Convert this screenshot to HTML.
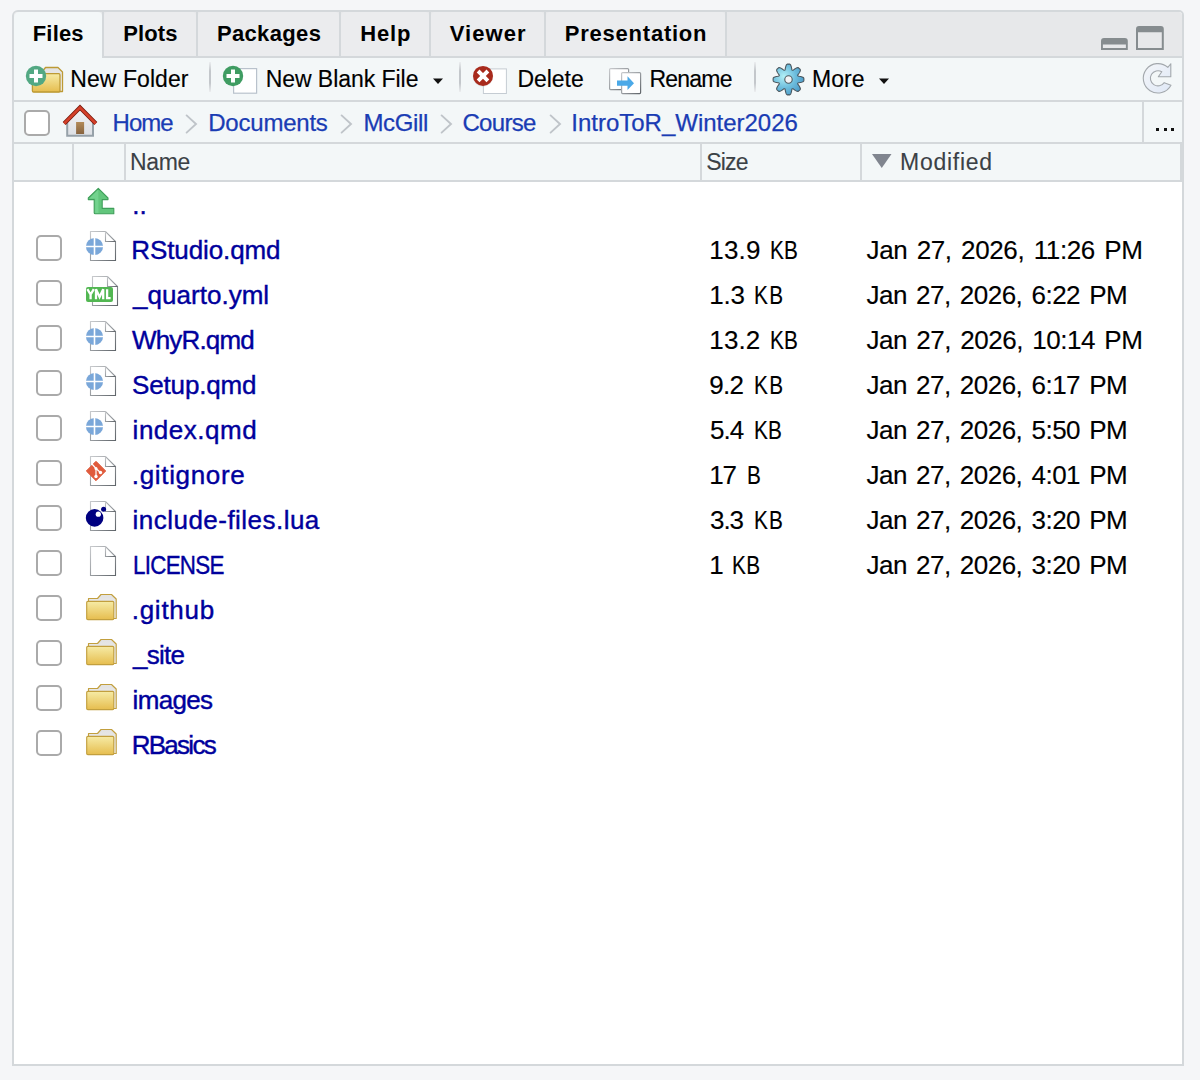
<!DOCTYPE html>
<html><head><meta charset="utf-8"><style>
*{margin:0;padding:0;box-sizing:border-box}
html,body{width:1200px;height:1080px;overflow:hidden;background:#f5f6f8;font-family:"Liberation Sans",sans-serif}
.a{position:absolute}
.t{position:absolute;white-space:nowrap;line-height:1;-webkit-text-stroke:0.4px currentColor}
.t{line-height:var(--lh,1)}
.i{position:absolute;overflow:visible}
.cb{position:absolute;width:26px;height:26px;border:2px solid #aaaaaa;border-radius:5px;background:#fff}
.sep{position:absolute;width:2px;top:62px;height:30px;background:linear-gradient(#eceef0,#c3c7cb 30%,#c3c7cb 70%,#eceef0)}
</style></head><body>
<svg width="0" height="0" style="position:absolute"><defs>
<linearGradient id="pg" x1="0" y1="0" x2="1" y2="1"><stop offset="0" stop-color="#c8cacd"/><stop offset="0.5" stop-color="#9a9ea2"/><stop offset="1" stop-color="#5f6469"/></linearGradient>
<linearGradient id="ffront" x1="0" y1="0" x2="0" y2="1"><stop offset="0" stop-color="#f6eba6"/><stop offset="1" stop-color="#e6bd4e"/></linearGradient>
<linearGradient id="fback" x1="0" y1="0" x2="0" y2="1"><stop offset="0" stop-color="#e2e2e2"/><stop offset="1" stop-color="#f4f4f4"/></linearGradient>
<radialGradient id="gear" cx="0.35" cy="0.4" r="0.7"><stop offset="0" stop-color="#b2f0f6"/><stop offset="0.55" stop-color="#6cbcdc"/><stop offset="1" stop-color="#4a98c6"/></radialGradient>
<linearGradient id="door" x1="0" y1="0" x2="0" y2="1"><stop offset="0" stop-color="#b28a58"/><stop offset="1" stop-color="#87633f"/></linearGradient>
<linearGradient id="hbody" x1="0" y1="0" x2="0" y2="1"><stop offset="0" stop-color="#f3f3f5"/><stop offset="1" stop-color="#dcdfe4"/></linearGradient>
<linearGradient id="refr" x1="0" y1="0" x2="1" y2="1"><stop offset="0" stop-color="#f4f6f9"/><stop offset="1" stop-color="#dfe8f6"/></linearGradient>
</defs></svg>

<!-- pane -->
<div class="a" style="left:12px;top:10px;width:1172px;height:1056px;border:2px solid #d4d8db;border-radius:6px 5px 0 0;background:#fff;overflow:hidden">
</div>
<!-- tab bar bg -->
<div class="a" style="left:14px;top:12px;width:1168px;height:44px;background:#e7e8ea;border-radius:4px 3px 0 0"></div>
<div class="a" style="left:14px;top:56px;width:1168px;height:2px;background:#d4d8db"></div>
<!-- inactive tabs -->
<div class="a" style="left:104px;top:12px;width:92px;height:44px;background:#ebecee;border-radius:4px 4px 0 0"></div>
<div class="a" style="left:198px;top:12px;width:141px;height:44px;background:#ebecee;border-radius:4px 4px 0 0"></div>
<div class="a" style="left:341px;top:12px;width:88px;height:44px;background:#ebecee;border-radius:4px 4px 0 0"></div>
<div class="a" style="left:431px;top:12px;width:113px;height:44px;background:#ebecee;border-radius:4px 4px 0 0"></div>
<div class="a" style="left:546px;top:12px;width:179px;height:44px;background:#ebecee;border-radius:4px 4px 0 0"></div>
<!-- dividers -->
<div class="a" style="left:102px;top:12px;width:2px;height:44px;background:#d4d8db"></div>
<div class="a" style="left:196px;top:12px;width:2px;height:44px;background:#d4d8db"></div>
<div class="a" style="left:339px;top:12px;width:2px;height:44px;background:#d4d8db"></div>
<div class="a" style="left:429px;top:12px;width:2px;height:44px;background:#d4d8db"></div>
<div class="a" style="left:544px;top:12px;width:2px;height:44px;background:#d4d8db"></div>
<div class="a" style="left:725px;top:12px;width:2px;height:44px;background:#d4d8db"></div>
<!-- active tab -->
<div class="a" style="left:14px;top:12px;width:88px;height:48px;background:#f3f7f8;border-radius:5px 4px 0 0"></div>
<!-- toolbar -->
<div class="a" style="left:14px;top:58px;width:1168px;height:42px;background:#f3f7f8"></div>
<div class="a" style="left:14px;top:100px;width:1168px;height:2px;background:#d4d8db"></div>
<!-- breadcrumb bar -->
<div class="a" style="left:14px;top:102px;width:1168px;height:40px;background:#f3f7f8"></div>
<div class="a" style="left:14px;top:142px;width:1168px;height:2px;background:#d4d8db"></div>
<div class="a" style="left:1142px;top:102px;width:2px;height:40px;background:#d4d8db"></div>
<!-- header -->
<div class="a" style="left:14px;top:144px;width:1166px;height:36px;background:#f3f7f8"></div>
<div class="a" style="left:14px;top:180px;width:1168px;height:2px;background:#d4d8db"></div>
<div class="a" style="left:1180px;top:144px;width:2px;height:38px;background:#d4d8db"></div>
<div class="a" style="left:72px;top:144px;width:2px;height:36px;background:#d4d8db"></div>
<div class="a" style="left:124px;top:144px;width:2px;height:36px;background:#d4d8db"></div>
<div class="a" style="left:700px;top:144px;width:2px;height:36px;background:#d4d8db"></div>
<div class="a" style="left:860px;top:144px;width:2px;height:36px;background:#d4d8db"></div>

<!-- toolbar separators -->
<div class="sep" style="left:209px"></div>
<div class="sep" style="left:459px"></div>
<div class="sep" style="left:754px"></div>

<!-- toolbar icons -->
<svg class="i" style="left:24px;top:64px" width="42" height="32" viewBox="0 0 42 32">
<path d="M9.5,8 H18 L21.5,3.5 H34 L38.5,8 V27.5 H9.5 Z" fill="url(#fback)" stroke="#bd9a35" stroke-width="1.3" stroke-linejoin="round"/>
<rect x="8.4" y="9.7" width="27.6" height="18.3" rx="1.2" fill="url(#ffront)" stroke="#bd9a35" stroke-width="1.3"/>
<circle cx="12" cy="12" r="10.2" fill="#52a883"/>
<path d="M12,5.5 V18.5 M5.5,12 H18.5" stroke="#fff" stroke-width="4"/>
</svg>
<svg class="i" style="left:221px;top:64px" width="38" height="32" viewBox="0 0 38 32">
<rect x="12.6" y="4.6" width="23" height="24.6" fill="#fff" stroke="#b9c2cc" stroke-width="1.2"/>
<circle cx="12" cy="12" r="10.2" fill="#3f9c62"/>
<path d="M12,5.5 V18.5 M5.5,12 H18.5" stroke="#fff" stroke-width="4"/>
</svg>
<svg class="i" style="left:470px;top:64px" width="40" height="32" viewBox="0 0 40 32">
<rect x="13.4" y="4.9" width="23" height="24.6" fill="#fff" stroke="#c5ccd3" stroke-width="1"/>
<circle cx="13" cy="12.6" r="10.2" fill="#000" opacity="0.08"/>
<circle cx="13" cy="11.9" r="10" fill="#a82a1c"/>
<path d="M8.1,7 L17.9,16.8 M17.9,7 L8.1,16.8" stroke="#fff" stroke-width="3.9"/>
</svg>
<svg class="i" style="left:606px;top:64px" width="38" height="32" viewBox="0 0 38 32">
<rect x="3.6" y="4.6" width="19" height="21" rx="1" fill="#fff" stroke="url(#pg)" stroke-width="1.2"/>
<rect x="15.6" y="8.6" width="19" height="21" rx="1" fill="#fff" stroke="url(#pg)" stroke-width="1.2"/>
<path d="M11,16.5 H21.5 V12.2 L28,19.2 L21.5,26 V21.8 H11 Z" fill="#4ba9e8"/>
</svg>
<svg class="i" style="left:772px;top:63px" width="33" height="33" viewBox="-16.5 -16.5 33 33">
<path id="gearp" d="M0.00,-15.40 L0.40,-15.39 L0.81,-15.38 L1.21,-15.34 L1.59,-15.16 L1.95,-14.81 L2.27,-14.30 L2.54,-13.68 L2.76,-12.97 L2.94,-12.23 L3.08,-11.50 L3.20,-10.81 L3.32,-10.22 L3.45,-9.74 L3.61,-9.41 L3.83,-9.24 L4.10,-9.21 L4.45,-9.33 L4.88,-9.57 L5.38,-9.91 L5.95,-10.31 L6.57,-10.72 L7.22,-11.12 L7.88,-11.47 L8.51,-11.72 L9.09,-11.85 L9.59,-11.85 L10.00,-11.70 L10.30,-11.44 L10.60,-11.17 L10.89,-10.89 L11.17,-10.60 L11.44,-10.30 L11.70,-10.00 L11.85,-9.59 L11.85,-9.09 L11.72,-8.51 L11.47,-7.88 L11.12,-7.22 L10.72,-6.57 L10.31,-5.95 L9.91,-5.38 L9.57,-4.88 L9.33,-4.45 L9.21,-4.10 L9.24,-3.83 L9.41,-3.61 L9.74,-3.45 L10.22,-3.32 L10.81,-3.20 L11.50,-3.08 L12.23,-2.94 L12.97,-2.76 L13.68,-2.54 L14.30,-2.27 L14.81,-1.95 L15.16,-1.59 L15.34,-1.21 L15.38,-0.81 L15.39,-0.40 L15.40,-0.00 L15.39,0.40 L15.38,0.81 L15.34,1.21 L15.16,1.59 L14.81,1.95 L14.30,2.27 L13.68,2.54 L12.97,2.76 L12.23,2.94 L11.50,3.08 L10.81,3.20 L10.22,3.32 L9.74,3.45 L9.41,3.61 L9.24,3.83 L9.21,4.10 L9.33,4.45 L9.57,4.88 L9.91,5.38 L10.31,5.95 L10.72,6.57 L11.12,7.22 L11.47,7.88 L11.72,8.51 L11.85,9.09 L11.85,9.59 L11.70,10.00 L11.44,10.30 L11.17,10.60 L10.89,10.89 L10.60,11.17 L10.30,11.44 L10.00,11.70 L9.59,11.85 L9.09,11.85 L8.51,11.72 L7.88,11.47 L7.22,11.12 L6.57,10.72 L5.95,10.31 L5.38,9.91 L4.88,9.57 L4.45,9.33 L4.10,9.21 L3.83,9.24 L3.61,9.41 L3.45,9.74 L3.32,10.22 L3.20,10.81 L3.08,11.50 L2.94,12.23 L2.76,12.97 L2.54,13.68 L2.27,14.30 L1.95,14.81 L1.59,15.16 L1.21,15.34 L0.81,15.38 L0.40,15.39 L0.00,15.40 L-0.40,15.39 L-0.81,15.38 L-1.21,15.34 L-1.59,15.16 L-1.95,14.81 L-2.27,14.30 L-2.54,13.68 L-2.76,12.97 L-2.94,12.23 L-3.08,11.50 L-3.20,10.81 L-3.32,10.22 L-3.45,9.74 L-3.61,9.41 L-3.83,9.24 L-4.10,9.21 L-4.45,9.33 L-4.88,9.57 L-5.38,9.91 L-5.95,10.31 L-6.57,10.72 L-7.22,11.12 L-7.88,11.47 L-8.51,11.72 L-9.09,11.85 L-9.59,11.85 L-10.00,11.70 L-10.30,11.44 L-10.60,11.17 L-10.89,10.89 L-11.17,10.60 L-11.44,10.30 L-11.70,10.00 L-11.85,9.59 L-11.85,9.09 L-11.72,8.51 L-11.47,7.88 L-11.12,7.22 L-10.72,6.57 L-10.31,5.95 L-9.91,5.38 L-9.57,4.88 L-9.33,4.45 L-9.21,4.10 L-9.24,3.83 L-9.41,3.61 L-9.74,3.45 L-10.22,3.32 L-10.81,3.20 L-11.50,3.08 L-12.23,2.94 L-12.97,2.76 L-13.68,2.54 L-14.30,2.27 L-14.81,1.95 L-15.16,1.59 L-15.34,1.21 L-15.38,0.81 L-15.39,0.40 L-15.40,0.00 L-15.39,-0.40 L-15.38,-0.81 L-15.34,-1.21 L-15.16,-1.59 L-14.81,-1.95 L-14.30,-2.27 L-13.68,-2.54 L-12.97,-2.76 L-12.23,-2.94 L-11.50,-3.08 L-10.81,-3.20 L-10.22,-3.32 L-9.74,-3.45 L-9.41,-3.61 L-9.24,-3.83 L-9.21,-4.10 L-9.33,-4.45 L-9.57,-4.88 L-9.91,-5.38 L-10.31,-5.95 L-10.72,-6.57 L-11.12,-7.22 L-11.47,-7.88 L-11.72,-8.51 L-11.85,-9.09 L-11.85,-9.59 L-11.70,-10.00 L-11.44,-10.30 L-11.17,-10.60 L-10.89,-10.89 L-10.60,-11.17 L-10.30,-11.44 L-10.00,-11.70 L-9.59,-11.85 L-9.09,-11.85 L-8.51,-11.72 L-7.88,-11.47 L-7.22,-11.12 L-6.57,-10.72 L-5.95,-10.31 L-5.38,-9.91 L-4.88,-9.57 L-4.45,-9.33 L-4.10,-9.21 L-3.83,-9.24 L-3.61,-9.41 L-3.45,-9.74 L-3.32,-10.22 L-3.20,-10.81 L-3.08,-11.50 L-2.94,-12.23 L-2.76,-12.97 L-2.54,-13.68 L-2.27,-14.30 L-1.95,-14.81 L-1.59,-15.16 L-1.21,-15.34 L-0.81,-15.38 L-0.40,-15.39 L-0.00,-15.40 Z" fill="url(#gear)" stroke="#3a4248" stroke-width="1.1" stroke-opacity="0.85"/>
<circle cx="0" cy="0" r="3.7" fill="#f2f4f6" stroke="#3a4248" stroke-width="1.1" stroke-opacity="0.85"/>
</svg>
<svg class="i" style="left:432px;top:77px" width="12" height="8" viewBox="0 0 12 8"><path d="M1,1.5 H11 L6,7 Z" fill="#111"/></svg>
<svg class="i" style="left:878px;top:77px" width="12" height="8" viewBox="0 0 12 8"><path d="M1,1.5 H11 L6,7 Z" fill="#111"/></svg>
<!-- refresh -->
<svg class="i" style="left:1141px;top:61px" width="34" height="34" viewBox="0 0 34 34">
<path d="M29.8,2.75 V15.7 H17.3 L20.8,10.72 A7.6,7.6 0 1 0 23.22,21.66 L29.98,24.2 A14.7,14.7 0 1 1 26.84,6.38 Z" fill="url(#refr)" stroke="#a3a8ad" stroke-width="1.1" stroke-linejoin="round"/>
</svg>
<!-- min / max -->
<svg class="i" style="left:1100px;top:25px" width="66" height="26" viewBox="0 0 66 26">
<path d="M1,25 V16 Q1,13 4,13 H24.8 Q27.8,13 27.8,16 V25 Z M2.9,19.5 V23.1 H25.9 V19.5 Z" fill="#868c8f" fill-rule="evenodd"/>
<path d="M36,25 V4 Q36,1 39,1 H60.8 Q63.8,1 63.8,4 V25 Z M38,7.2 V23 H61.8 V7.2 Z" fill="#868c8f" fill-rule="evenodd"/>
</svg>
<!-- breadcrumb checkbox, home, chevrons -->
<div class="cb" style="left:24px;top:110px"></div>
<svg class="i" style="left:62px;top:104px" width="36" height="34" viewBox="0 0 36 34">
<path d="M5,17 L18,4.5 L31,17 V31.8 H5 Z" fill="url(#hbody)"/>
<path d="M5.2,18 V31.8 H31 V18" fill="none" stroke="#96a1a9" stroke-width="2"/>
<rect x="14.1" y="18" width="8" height="12" fill="url(#door)"/>
<path d="M2.2,19.5 L18,3.6 L33.8,19.5" fill="none" stroke="#7a1a0c" stroke-width="4.2"/>
<path d="M2.2,19.5 L18,3.6 L33.8,19.5" fill="none" stroke="#d5402a" stroke-width="2.6"/>
</svg>
<svg class="i" style="left:184px;top:114px" width="16" height="20" viewBox="0 0 16 20"><path d="M2.6,1.4 L12,10 L2.6,18.6" fill="none" stroke="#bfc4c9" stroke-width="1.9" stroke-linecap="round"/></svg>
<svg class="i" style="left:339px;top:114px" width="16" height="20" viewBox="0 0 16 20"><path d="M2.6,1.4 L12,10 L2.6,18.6" fill="none" stroke="#bfc4c9" stroke-width="1.9" stroke-linecap="round"/></svg>
<svg class="i" style="left:439px;top:114px" width="16" height="20" viewBox="0 0 16 20"><path d="M2.6,1.4 L12,10 L2.6,18.6" fill="none" stroke="#bfc4c9" stroke-width="1.9" stroke-linecap="round"/></svg>
<svg class="i" style="left:547.5px;top:114px" width="16" height="20" viewBox="0 0 16 20"><path d="M2.6,1.4 L12,10 L2.6,18.6" fill="none" stroke="#bfc4c9" stroke-width="1.9" stroke-linecap="round"/></svg>
<!-- ellipsis -->
<div class="a" style="left:1156px;top:128px;width:3px;height:3px;background:#111"></div>
<div class="a" style="left:1164px;top:128px;width:3px;height:3px;background:#111"></div>
<div class="a" style="left:1171px;top:128px;width:3px;height:3px;background:#111"></div>
<!-- sort triangle -->
<svg class="i" style="left:871px;top:153px" width="22" height="16" viewBox="0 0 22 16"><path d="M1,1 H20.5 L10.75,15 Z" fill="#80858f"/></svg>
<!-- up arrow -->
<svg class="i" style="left:86px;top:186px" width="30" height="30" viewBox="0 0 30 30">
<path d="M12.3,2.3 L22,12 V13.6 H16.2 V22.4 H27.8 V27.8 H9.2 Q8.2,27.8 8.2,26.8 V13.6 H2.3 V12 Z" fill="#62c67c" stroke="#3f9f5a" stroke-width="1.1" stroke-linejoin="round"/>
<path d="M12.3,3.5 L3.5,12.5 H9.2 V27 H12.5 Z" fill="#7bd895" opacity="0.7"/>
</svg>
<div class="cb" style="left:36px;top:235px"></div>
<svg class="i" style="left:90px;top:231px" width="26" height="30" viewBox="0 0 26 30">
<path d="M0.5,0.5 H15.5 L25.5,10.5 V29.5 H0.5 Z" fill="#fff" stroke="url(#pg)" stroke-width="1.1"/>
<path d="M15.5,0.5 V10.5 H25.5" fill="none" stroke="url(#pg)" stroke-width="1.1"/>
</svg>
<svg class="i" style="left:85px;top:237px" width="20" height="20" viewBox="0 0 20 20">
<circle cx="9.5" cy="9.5" r="8.6" fill="#7aa7d9"/><path d="M9.5,0 V19 M0,9.5 H19" stroke="#fff" stroke-width="1.6"/></svg>
<div class="cb" style="left:36px;top:280px"></div>
<svg class="i" style="left:92px;top:276px" width="26" height="30" viewBox="0 0 26 30">
<path d="M0.5,0.5 H15.5 L25.5,10.5 V29.5 H0.5 Z" fill="#fff" stroke="url(#pg)" stroke-width="1.1"/>
<path d="M15.5,0.5 V10.5 H25.5" fill="none" stroke="url(#pg)" stroke-width="1.1"/>
</svg>
<svg class="i" style="left:86px;top:287px" width="27" height="15" viewBox="0 0 27 15">
<rect x="0" y="0" width="27" height="15" rx="2" fill="#52b752"/>
<path d="M1.4,2.2 L4.6,7.6 L7.8,2.2 M4.6,7.6 V12.3 M10,12.3 V2.2 L13.6,10 L17.2,2.2 V12.3 M21.1,2.2 V11.2 H24.6" fill="none" stroke="#fff" stroke-width="2.3" stroke-linejoin="miter"/></svg>
<div class="cb" style="left:36px;top:325px"></div>
<svg class="i" style="left:90px;top:321px" width="26" height="30" viewBox="0 0 26 30">
<path d="M0.5,0.5 H15.5 L25.5,10.5 V29.5 H0.5 Z" fill="#fff" stroke="url(#pg)" stroke-width="1.1"/>
<path d="M15.5,0.5 V10.5 H25.5" fill="none" stroke="url(#pg)" stroke-width="1.1"/>
</svg>
<svg class="i" style="left:85px;top:327px" width="20" height="20" viewBox="0 0 20 20">
<circle cx="9.5" cy="9.5" r="8.6" fill="#7aa7d9"/><path d="M9.5,0 V19 M0,9.5 H19" stroke="#fff" stroke-width="1.6"/></svg>
<div class="cb" style="left:36px;top:370px"></div>
<svg class="i" style="left:90px;top:366px" width="26" height="30" viewBox="0 0 26 30">
<path d="M0.5,0.5 H15.5 L25.5,10.5 V29.5 H0.5 Z" fill="#fff" stroke="url(#pg)" stroke-width="1.1"/>
<path d="M15.5,0.5 V10.5 H25.5" fill="none" stroke="url(#pg)" stroke-width="1.1"/>
</svg>
<svg class="i" style="left:85px;top:372px" width="20" height="20" viewBox="0 0 20 20">
<circle cx="9.5" cy="9.5" r="8.6" fill="#7aa7d9"/><path d="M9.5,0 V19 M0,9.5 H19" stroke="#fff" stroke-width="1.6"/></svg>
<div class="cb" style="left:36px;top:415px"></div>
<svg class="i" style="left:90px;top:411px" width="26" height="30" viewBox="0 0 26 30">
<path d="M0.5,0.5 H15.5 L25.5,10.5 V29.5 H0.5 Z" fill="#fff" stroke="url(#pg)" stroke-width="1.1"/>
<path d="M15.5,0.5 V10.5 H25.5" fill="none" stroke="url(#pg)" stroke-width="1.1"/>
</svg>
<svg class="i" style="left:85px;top:417px" width="20" height="20" viewBox="0 0 20 20">
<circle cx="9.5" cy="9.5" r="8.6" fill="#7aa7d9"/><path d="M9.5,0 V19 M0,9.5 H19" stroke="#fff" stroke-width="1.6"/></svg>
<div class="cb" style="left:36px;top:460px"></div>
<svg class="i" style="left:90px;top:456px" width="26" height="30" viewBox="0 0 26 30">
<path d="M0.5,0.5 H15.5 L25.5,10.5 V29.5 H0.5 Z" fill="#fff" stroke="url(#pg)" stroke-width="1.1"/>
<path d="M15.5,0.5 V10.5 H25.5" fill="none" stroke="url(#pg)" stroke-width="1.1"/>
</svg>
<svg class="i" style="left:84px;top:459px" width="24" height="24" viewBox="0 0 24 24">
<path d="M12,2.3 L21.7,12 L12,21.7 L2.3,12 Z" fill="#e05b3c" stroke="#e05b3c" stroke-width="1" stroke-linejoin="round"/>
<path d="M8,5 L12,9.5 L16.5,13.5 M12,9.5 V17.5" stroke="#fff" stroke-width="1.2" fill="none"/>
<circle cx="12" cy="17.5" r="1.7" fill="#fff"/><circle cx="16.5" cy="13.5" r="1.7" fill="#fff"/><circle cx="12" cy="9.5" r="1.5" fill="#fff"/></svg>
<div class="cb" style="left:36px;top:505px"></div>
<svg class="i" style="left:90px;top:501px" width="26" height="30" viewBox="0 0 26 30">
<path d="M0.5,0.5 H15.5 L25.5,10.5 V29.5 H0.5 Z" fill="#fff" stroke="url(#pg)" stroke-width="1.1"/>
<path d="M15.5,0.5 V10.5 H25.5" fill="none" stroke="url(#pg)" stroke-width="1.1"/>
</svg>
<svg class="i" style="left:84px;top:503px" width="24" height="24" viewBox="0 0 24 24">
<circle cx="10.6" cy="14.9" r="8.8" fill="#000080"/><circle cx="14.3" cy="11.2" r="2.6" fill="#fff"/><circle cx="19.6" cy="6.3" r="2.5" fill="#000080"/></svg>
<div class="cb" style="left:36px;top:550px"></div>
<svg class="i" style="left:90px;top:546px" width="26" height="30" viewBox="0 0 26 30">
<path d="M0.5,0.5 H15.5 L25.5,10.5 V29.5 H0.5 Z" fill="#fff" stroke="url(#pg)" stroke-width="1.1"/>
<path d="M15.5,0.5 V10.5 H25.5" fill="none" stroke="url(#pg)" stroke-width="1.1"/>
</svg>
<div class="cb" style="left:36px;top:595px"></div>
<svg class="i" style="left:85px;top:593px" width="33" height="28" viewBox="0 0 33 28">
<path d="M3.5,5.5 H12.5 L16,1.5 H26.5 L31.2,6 V25.5 H3.5 Z" fill="url(#fback)" stroke="#c29f3e" stroke-width="1.15" stroke-linejoin="round"/>
<rect x="1.7" y="8.4" width="27.1" height="18.2" rx="1.2" fill="url(#ffront)" stroke="#c29f3e" stroke-width="1.15"/></svg>
<div class="cb" style="left:36px;top:640px"></div>
<svg class="i" style="left:85px;top:638px" width="33" height="28" viewBox="0 0 33 28">
<path d="M3.5,5.5 H12.5 L16,1.5 H26.5 L31.2,6 V25.5 H3.5 Z" fill="url(#fback)" stroke="#c29f3e" stroke-width="1.15" stroke-linejoin="round"/>
<rect x="1.7" y="8.4" width="27.1" height="18.2" rx="1.2" fill="url(#ffront)" stroke="#c29f3e" stroke-width="1.15"/></svg>
<div class="cb" style="left:36px;top:685px"></div>
<svg class="i" style="left:85px;top:683px" width="33" height="28" viewBox="0 0 33 28">
<path d="M3.5,5.5 H12.5 L16,1.5 H26.5 L31.2,6 V25.5 H3.5 Z" fill="url(#fback)" stroke="#c29f3e" stroke-width="1.15" stroke-linejoin="round"/>
<rect x="1.7" y="8.4" width="27.1" height="18.2" rx="1.2" fill="url(#ffront)" stroke="#c29f3e" stroke-width="1.15"/></svg>
<div class="cb" style="left:36px;top:730px"></div>
<svg class="i" style="left:85px;top:728px" width="33" height="28" viewBox="0 0 33 28">
<path d="M3.5,5.5 H12.5 L16,1.5 H26.5 L31.2,6 V25.5 H3.5 Z" fill="url(#fback)" stroke="#c29f3e" stroke-width="1.15" stroke-linejoin="round"/>
<rect x="1.7" y="8.4" width="27.1" height="18.2" rx="1.2" fill="url(#ffront)" stroke="#c29f3e" stroke-width="1.15"/></svg>
<div class="t" style="left:32.78px;top:22.98px;font-size:22px;font-weight:bold;-webkit-text-stroke:0;letter-spacing:0.155px;color:#000;">Files</div>
<div class="t" style="left:123.34px;top:22.98px;font-size:22px;font-weight:bold;-webkit-text-stroke:0;letter-spacing:0.065px;color:#000;">Plots</div>
<div class="t" style="left:216.90px;top:22.98px;font-size:22px;font-weight:bold;-webkit-text-stroke:0;letter-spacing:0.360px;color:#000;">Packages</div>
<div class="t" style="left:360.26px;top:22.98px;font-size:22px;font-weight:bold;-webkit-text-stroke:0;letter-spacing:0.823px;color:#000;">Help</div>
<div class="t" style="left:449.65px;top:22.98px;font-size:22px;font-weight:bold;-webkit-text-stroke:0;letter-spacing:1.100px;color:#000;">Viewer</div>
<div class="t" style="left:564.82px;top:22.98px;font-size:22px;font-weight:bold;-webkit-text-stroke:0;letter-spacing:0.767px;color:#000;">Presentation</div>
<div class="t" style="left:70.30px;top:67.53px;font-size:23px;letter-spacing:0.067px;color:#000;-webkit-text-stroke:0.15px currentColor;">New Folder</div>
<div class="t" style="left:265.64px;top:67.53px;font-size:23px;letter-spacing:-0.045px;color:#000;-webkit-text-stroke:0.15px currentColor;">New Blank File</div>
<div class="t" style="left:517.40px;top:67.53px;font-size:23px;letter-spacing:-0.020px;color:#000;-webkit-text-stroke:0.15px currentColor;">Delete</div>
<div class="t" style="left:649.52px;top:67.53px;font-size:23px;letter-spacing:-0.792px;color:#000;-webkit-text-stroke:0.15px currentColor;">Rename</div>
<div class="t" style="left:811.96px;top:67.53px;font-size:23px;letter-spacing:0.100px;color:#000;-webkit-text-stroke:0.15px currentColor;">More</div>
<div class="t" style="left:112.62px;top:110.68px;font-size:24px;letter-spacing:-0.993px;color:#1a3cb4;-webkit-text-stroke:0.25px currentColor;">Home</div>
<div class="t" style="left:208.24px;top:110.68px;font-size:24px;letter-spacing:-0.218px;color:#1a3cb4;-webkit-text-stroke:0.25px currentColor;">Documents</div>
<div class="t" style="left:363.52px;top:110.68px;font-size:24px;letter-spacing:-0.384px;color:#1a3cb4;-webkit-text-stroke:0.25px currentColor;">McGill</div>
<div class="t" style="left:462.44px;top:110.68px;font-size:24px;letter-spacing:-0.688px;color:#1a3cb4;-webkit-text-stroke:0.25px currentColor;">Course</div>
<div class="t" style="left:571.36px;top:110.68px;font-size:24px;letter-spacing:-0.017px;color:#1a3cb4;-webkit-text-stroke:0.25px currentColor;">IntroToR_Winter2026</div>
<div class="t" style="left:130.10px;top:150.53px;font-size:23px;letter-spacing:-0.367px;color:#3b4146;-webkit-text-stroke:0.1px currentColor;">Name</div>
<div class="t" style="left:706.20px;top:150.53px;font-size:23px;letter-spacing:-0.780px;color:#3b4146;-webkit-text-stroke:0.1px currentColor;">Size</div>
<div class="t" style="left:900.10px;top:150.53px;font-size:23px;letter-spacing:0.731px;color:#3b4146;-webkit-text-stroke:0.1px currentColor;">Modified</div>
<div class="t" style="left:132.30px;top:191.99px;font-size:26px;color:#00009c;">..</div>
<div class="t" style="left:131.30px;top:236.99px;font-size:26px;letter-spacing:-0.110px;color:#00009c;">RStudio.qmd</div>
<div class="t" style="left:709.36px;top:236.99px;font-size:26px;letter-spacing:0.147px;color:#000;-webkit-text-stroke:0.15px currentColor;">13.9</div>
<div class="t" style="left:769.84px;top:236.99px;font-size:26px;letter-spacing:0.135px;color:#000;transform:scaleX(0.8);transform-origin:0 0;-webkit-text-stroke:0.15px currentColor;">KB</div>
<div class="t" style="left:866.50px;top:236.99px;font-size:26px;letter-spacing:-0.367px;color:#000;-webkit-text-stroke:0.15px currentColor;word-spacing:2.5px;">Jan 27, 2026, 11:26 PM</div>
<div class="t" style="left:133.00px;top:281.99px;font-size:26px;letter-spacing:0.030px;color:#00009c;">_quarto.yml</div>
<div class="t" style="left:709.36px;top:281.99px;font-size:26px;letter-spacing:-0.260px;color:#000;-webkit-text-stroke:0.15px currentColor;">1.3</div>
<div class="t" style="left:754.20px;top:281.99px;font-size:26px;letter-spacing:1.775px;color:#000;transform:scaleX(0.8);transform-origin:0 0;-webkit-text-stroke:0.15px currentColor;">KB</div>
<div class="t" style="left:866.50px;top:281.99px;font-size:26px;letter-spacing:-0.520px;color:#000;-webkit-text-stroke:0.15px currentColor;word-spacing:2.5px;">Jan 27, 2026, 6:22 PM</div>
<div class="t" style="left:132.00px;top:326.99px;font-size:26px;letter-spacing:-0.829px;color:#00009c;">WhyR.qmd</div>
<div class="t" style="left:709.36px;top:326.99px;font-size:26px;letter-spacing:0.093px;color:#000;-webkit-text-stroke:0.15px currentColor;">13.2</div>
<div class="t" style="left:769.84px;top:326.99px;font-size:26px;letter-spacing:0.135px;color:#000;transform:scaleX(0.8);transform-origin:0 0;-webkit-text-stroke:0.15px currentColor;">KB</div>
<div class="t" style="left:866.50px;top:326.99px;font-size:26px;letter-spacing:-0.462px;color:#000;-webkit-text-stroke:0.15px currentColor;word-spacing:2.5px;">Jan 27, 2026, 10:14 PM</div>
<div class="t" style="left:132.10px;top:371.99px;font-size:26px;letter-spacing:-0.175px;color:#00009c;">Setup.qmd</div>
<div class="t" style="left:709.14px;top:371.99px;font-size:26px;letter-spacing:-0.600px;color:#000;-webkit-text-stroke:0.15px currentColor;">9.2</div>
<div class="t" style="left:754.20px;top:371.99px;font-size:26px;letter-spacing:1.775px;color:#000;transform:scaleX(0.8);transform-origin:0 0;-webkit-text-stroke:0.15px currentColor;">KB</div>
<div class="t" style="left:866.50px;top:371.99px;font-size:26px;letter-spacing:-0.520px;color:#000;-webkit-text-stroke:0.15px currentColor;word-spacing:2.5px;">Jan 27, 2026, 6:17 PM</div>
<div class="t" style="left:132.60px;top:416.99px;font-size:26px;letter-spacing:0.512px;color:#00009c;">index.qmd</div>
<div class="t" style="left:710.08px;top:416.99px;font-size:26px;letter-spacing:-1.020px;color:#000;-webkit-text-stroke:0.15px currentColor;">5.4</div>
<div class="t" style="left:754.12px;top:416.99px;font-size:26px;letter-spacing:0.135px;color:#000;transform:scaleX(0.8);transform-origin:0 0;-webkit-text-stroke:0.15px currentColor;">KB</div>
<div class="t" style="left:866.50px;top:416.99px;font-size:26px;letter-spacing:-0.520px;color:#000;-webkit-text-stroke:0.15px currentColor;word-spacing:2.5px;">Jan 27, 2026, 5:50 PM</div>
<div class="t" style="left:131.80px;top:461.99px;font-size:26px;letter-spacing:0.667px;color:#00009c;">.gitignore</div>
<div class="t" style="left:709.32px;top:461.99px;font-size:26px;letter-spacing:-1.380px;color:#000;-webkit-text-stroke:0.15px currentColor;">17</div>
<div class="t" style="left:746.84px;top:461.99px;font-size:26px;color:#000;transform:scaleX(0.8);transform-origin:0 0;-webkit-text-stroke:0.15px currentColor;">B</div>
<div class="t" style="left:866.50px;top:461.99px;font-size:26px;letter-spacing:-0.520px;color:#000;-webkit-text-stroke:0.15px currentColor;word-spacing:2.5px;">Jan 27, 2026, 4:01 PM</div>
<div class="t" style="left:132.60px;top:506.99px;font-size:26px;letter-spacing:0.469px;color:#00009c;">include-files.lua</div>
<div class="t" style="left:710.00px;top:506.99px;font-size:26px;letter-spacing:-1.070px;color:#000;-webkit-text-stroke:0.15px currentColor;">3.3</div>
<div class="t" style="left:754.20px;top:506.99px;font-size:26px;letter-spacing:1.560px;color:#000;transform:scaleX(0.8);transform-origin:0 0;-webkit-text-stroke:0.15px currentColor;">KB</div>
<div class="t" style="left:866.50px;top:506.99px;font-size:26px;letter-spacing:-0.520px;color:#000;-webkit-text-stroke:0.15px currentColor;word-spacing:2.5px;">Jan 27, 2026, 3:20 PM</div>
<div class="t" style="left:133.20px;top:551.99px;font-size:26px;letter-spacing:-0.828px;color:#00009c;transform:scaleX(0.86);transform-origin:0 0;">LICENSE</div>
<div class="t" style="left:709.32px;top:551.99px;font-size:26px;color:#000;-webkit-text-stroke:0.15px currentColor;">1</div>
<div class="t" style="left:731.84px;top:551.99px;font-size:26px;letter-spacing:0.330px;color:#000;transform:scaleX(0.8);transform-origin:0 0;-webkit-text-stroke:0.15px currentColor;">KB</div>
<div class="t" style="left:866.50px;top:551.99px;font-size:26px;letter-spacing:-0.520px;color:#000;-webkit-text-stroke:0.15px currentColor;word-spacing:2.5px;">Jan 27, 2026, 3:20 PM</div>
<div class="t" style="left:131.70px;top:596.99px;font-size:26px;letter-spacing:0.750px;color:#00009c;">.github</div>
<div class="t" style="left:133.00px;top:641.99px;font-size:26px;letter-spacing:-0.750px;color:#00009c;">_site</div>
<div class="t" style="left:132.50px;top:686.99px;font-size:26px;letter-spacing:-0.640px;color:#00009c;">images</div>
<div class="t" style="left:131.70px;top:731.99px;font-size:26px;letter-spacing:-1.733px;color:#00009c;">RBasics</div>
</body></html>
